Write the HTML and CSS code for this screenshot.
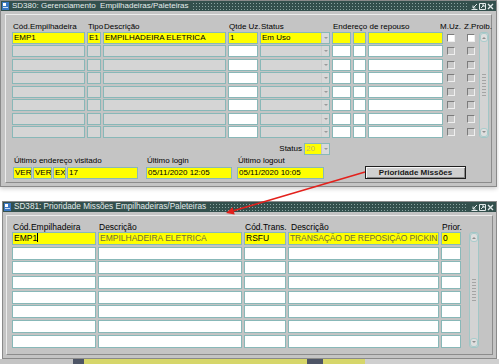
FILE: index.html
```html
<!DOCTYPE html>
<html lang="pt-BR">
<head>
    <meta charset="UTF-8">
    <title>SD380 / SD381</title>
    <link rel="stylesheet" href="styles.css">
</head>
<body>
<div class="screen">

    <!-- SD380 -->
    <div class="win win-main">
        <div class="titlebar">
            <svg class="app-icon" width="7" height="8" viewBox="0 0 7 8"><rect x="0" y="0" width="7" height="8" fill="#3b78c4"/><rect x="1" y="1" width="3" height="3" fill="#fff"/><rect x="1" y="5" width="5" height="1" fill="#cfe0f5"/></svg>
            <span class="title">SD380: Gerenciamento&nbsp; Empilhadeiras/Paleteiras</span>
            <span class="hatch"></span>
            <span class="wbtns">
                <svg width="7" height="7" viewBox="0 0 7 7"><path d="M6 1L2 5M2 2.5V5H4.5M0.5 6.5H6.5" stroke="#e2eaea" fill="none"/></svg>
                <svg width="7" height="7" viewBox="0 0 7 7"><path d="M0.5 0.5H6.5V6.5H0.5Z M2 5L5 2M3 2H5V4" stroke="#e2eaea" fill="none"/></svg>
                <svg width="7" height="7" viewBox="0 0 7 7"><path d="M1 1L6 6M6 1L1 6" stroke="#e2eaea" stroke-width="1.3" fill="none"/></svg>
            </span>
        </div>
        <div class="panel panel-main">
            <div class="g1 head">
                <span class="h1">Cód.Empilhadeira</span>
                <span class="h2">Tipo</span>
                <span class="h3">Descrição</span>
                <span class="h4">Qtde Uz.</span>
                <span class="h5">Status</span>
                <span class="h6">Endereço de repouso</span>
                <span class="h7">M.Uz.</span>
                <span class="h8">Z.Proib.</span>
            </div>
            <div class="block">
                <div class="rows rows1">
                    <div class="g1 r1">
                        <div class="c y">EMP1</div><div class="c y">E1</div><div class="c y">EMPILHADEIRA ELETRICA</div><div class="c y">1</div>
                        <div class="c y dd"><span>Em Uso</span><i class="arr"></i></div>
                        <div class="c y"></div><div class="c y"></div><div class="c y"></div>
                        <div class="chk"><b class="on"></b></div><div class="chk k2"><b class="on"></b></div>
                    </div>
                    <div class="g1 r1">
                        <div class="c g"></div><div class="c g"></div><div class="c g"></div><div class="c"></div>
                        <div class="c g dd"><span></span><i class="arr"></i></div>
                        <div class="c"></div><div class="c"></div><div class="c"></div>
                        <div class="chk"><b></b></div><div class="chk k2"><b></b></div>
                    </div>
                    <div class="g1 r1">
                        <div class="c g"></div><div class="c g"></div><div class="c g"></div><div class="c"></div>
                        <div class="c g dd"><span></span><i class="arr"></i></div>
                        <div class="c"></div><div class="c"></div><div class="c"></div>
                        <div class="chk"><b></b></div><div class="chk k2"><b></b></div>
                    </div>
                    <div class="g1 r1">
                        <div class="c g"></div><div class="c g"></div><div class="c g"></div><div class="c"></div>
                        <div class="c g dd"><span></span><i class="arr"></i></div>
                        <div class="c"></div><div class="c"></div><div class="c"></div>
                        <div class="chk"><b></b></div><div class="chk k2"><b></b></div>
                    </div>
                    <div class="g1 r1">
                        <div class="c g"></div><div class="c g"></div><div class="c g"></div><div class="c"></div>
                        <div class="c g dd"><span></span><i class="arr"></i></div>
                        <div class="c"></div><div class="c"></div><div class="c"></div>
                        <div class="chk"><b></b></div><div class="chk k2"><b></b></div>
                    </div>
                    <div class="g1 r1">
                        <div class="c g"></div><div class="c g"></div><div class="c g"></div><div class="c"></div>
                        <div class="c g dd"><span></span><i class="arr"></i></div>
                        <div class="c"></div><div class="c"></div><div class="c"></div>
                        <div class="chk"><b></b></div><div class="chk k2"><b></b></div>
                    </div>
                    <div class="g1 r1">
                        <div class="c g"></div><div class="c g"></div><div class="c g"></div><div class="c"></div>
                        <div class="c g dd"><span></span><i class="arr"></i></div>
                        <div class="c"></div><div class="c"></div><div class="c"></div>
                        <div class="chk"><b></b></div><div class="chk k2"><b></b></div>
                    </div>
                    <div class="g1 r1">
                        <div class="c g"></div><div class="c g"></div><div class="c g"></div><div class="c"></div>
                        <div class="c g dd"><span></span><i class="arr"></i></div>
                        <div class="c"></div><div class="c"></div><div class="c"></div>
                        <div class="chk"><b></b></div><div class="chk k2"><b></b></div>
                    </div>
                </div>
                <div class="sb">
                    <span class="sb-btn"><i class="up"></i></span>
                    <span class="grip"></span>
                    <span class="sb-btn"><i class="down"></i></span>
                </div>
            </div>

            <div class="status-row">
                <span>Status</span>
                <div class="c y dd status-field"><span class="pale">20</span><i class="arr"></i></div>
            </div>

            <div class="foot">
                <div class="fgroup">
                    <div class="lbl">Último endereço visitado</div>
                    <div class="fields">
                        <div class="c y w-ver">VER</div>
                        <div class="c y w-ver">VER</div>
                        <div class="c y w-ex">EX</div>
                        <div class="c y w-num">17</div>
                    </div>
                </div>
                <div class="fgroup grp-login">
                    <div class="lbl">Último login</div>
                    <div class="c y w-date">05/11/2020 12:05</div>
                </div>
                <div class="fgroup grp-logout">
                    <div class="lbl">Último logout</div>
                    <div class="c y w-date2">05/11/2020 10:05</div>
                </div>
                <button class="btn">Prioridade Missões</button>
            </div>
        </div>
    </div>

    <!-- SD381 -->
    <div class="win win-sub">
        <div class="titlebar">
            <svg class="app-icon" width="7" height="8" viewBox="0 0 7 8"><rect x="0" y="0" width="7" height="8" fill="#3b78c4"/><rect x="1" y="1" width="3" height="3" fill="#fff"/><rect x="1" y="5" width="5" height="1" fill="#cfe0f5"/></svg>
            <span class="title">SD381: Prioridade Missões Empilhadeiras/Paleteiras</span>
            <span class="hatch"></span>
            <span class="wbtns">
                <svg width="7" height="7" viewBox="0 0 7 7"><path d="M6 1L2 5M2 2.5V5H4.5M0.5 6.5H6.5" stroke="#e2eaea" fill="none"/></svg>
                <svg width="7" height="7" viewBox="0 0 7 7"><path d="M0.5 0.5H6.5V6.5H0.5Z M2 5L5 2M3 2H5V4" stroke="#e2eaea" fill="none"/></svg>
                <svg width="7" height="7" viewBox="0 0 7 7"><path d="M1 1L6 6M6 1L1 6" stroke="#e2eaea" stroke-width="1.3" fill="none"/></svg>
            </span>
        </div>
        <div class="panel panel-sub">
            <div class="g2 head head2">
                <span>Cód.Empilhadeira</span>
                <span>Descrição</span>
                <span>Cód.Trans.</span>
                <span class="d2">Descrição</span>
                <span>Prior.</span>
            </div>
            <div class="block block2">
                <div class="rows rows2">
                    <div class="g2 r2">
                        <div class="c y">EMP1<i class="caret"></i></div>
                        <div class="c y dim">EMPILHADEIRA ELETRICA</div>
                        <div class="c y">RSFU</div>
                        <div class="c y dim tight">TRANSAÇÃO DE REPOSIÇÃO PICKIN</div>
                        <div class="c y">0</div>
                    </div>
                    <div class="g2 r2"><div class="c"></div><div class="c"></div><div class="c"></div><div class="c"></div><div class="c"></div></div>
                    <div class="g2 r2"><div class="c"></div><div class="c"></div><div class="c"></div><div class="c"></div><div class="c"></div></div>
                    <div class="g2 r2"><div class="c"></div><div class="c"></div><div class="c"></div><div class="c"></div><div class="c"></div></div>
                    <div class="g2 r2"><div class="c"></div><div class="c"></div><div class="c"></div><div class="c"></div><div class="c"></div></div>
                    <div class="g2 r2"><div class="c"></div><div class="c"></div><div class="c"></div><div class="c"></div><div class="c"></div></div>
                    <div class="g2 r2"><div class="c"></div><div class="c"></div><div class="c"></div><div class="c"></div><div class="c"></div></div>
                    <div class="g2 r2"><div class="c"></div><div class="c"></div><div class="c"></div><div class="c"></div><div class="c"></div></div>
                </div>
                <div class="sb">
                    <span class="sb-btn"><i class="up"></i></span>
                    <span class="grip"></span>
                    <span class="sb-btn"><i class="down"></i></span>
                </div>
            </div>
        </div>
    </div>

    <div class="strip"></div>

    <!-- red callout arrow -->
    <svg class="callout" width="499" height="364" viewBox="0 0 499 364">
        <line x1="365" y1="172" x2="233.5" y2="210.8" stroke="#e3211c" stroke-width="1.6"/>
        <polygon points="226,213 234.7,214.4 232.6,207.2" fill="#e3211c"/>
    </svg>
</div>
</body>
</html>
```

FILE: styles.css
```css
* { box-sizing: border-box; }
body {
    margin: 0;
    background-color: #fff;
    font-family: "Liberation Sans", Arial, sans-serif;
    font-size: 8px;
    color: #000;
}
.screen {
    position: relative;
    width: 499px;
    height: 364px;
    overflow: hidden;
}

/* windows */
.win {
    display: flex;
    flex-direction: column;
    background-color: #c4c4c4;
    border: 1px solid #8a8a8a;
}
.win-main {
    width: 497px;
    height: 187px;
    box-shadow: 0 2px 4px rgba(0, 0, 0, 0.18);
}
.win-sub {
    width: 495px;
    height: 158px;
    margin: 14px 0 0 2px;
}
.titlebar {
    height: 10px;
    flex: none;
    display: flex;
    align-items: center;
    background-color: #33504d;
    color: #e4ecec;
    line-height: 10px;
}
.app-icon { margin-left: 1px; flex: none; }
.title { padding: 0 3px 0 3px; white-space: pre; }
.win-sub .title { font-size: 8.2px; }
.hatch {
    flex: 1;
    height: 8px;
    background-image: radial-gradient(circle, #8aa4a1 0.6px, transparent 0.9px);
    background-size: 3px 3px;
}
.wbtns {
    display: flex;
    gap: 1px;
    padding: 0 2px 0 3px;
}
.wbtns svg { display: block; }

.panel {
    flex: 1;
    border: 1px solid;
    border-color: #ececec #8c8c8c #8c8c8c #ececec;
}
.panel-main { margin: 3px 4px; padding: 7px 0 0 6px; }
.panel-sub { margin: 3px 3px; padding: 7px 0 0 5px; font-size: 8.5px; }

/* grids */
.g1 {
    display: grid;
    grid-template-columns: 73px 14px 123px 30px 70px 19px 13px 75px 16px 14px;
    column-gap: 2px;
}
.g2 {
    display: grid;
    grid-template-columns: 84px 144px 42px 151px 20px;
    column-gap: 2px;
}
.head { height: 10px; line-height: 10px; white-space: nowrap; }
.head span { grid-row: 1; padding-left: 1px; }
.h1 { grid-column: 1; }
.h2 { grid-column: 2; }
.h3 { grid-column: 3; }
.h4 { grid-column: 4; }
.h5 { grid-column: 5; }
.h6 { grid-column: 6 / 9; }
.h7 { grid-column: 8 / 10; text-align: right; }
.h8 { grid-column: 10; }
.head2 { height: 9px; line-height: 9px; }
.head2 .d2 { padding-left: 3px; }

.block { display: flex; gap: 2px; }
.block2 { gap: 8px; }
.rows { display: flex; flex-direction: column; }
.rows1 { gap: 1.43px; }
.rows2 { gap: 1.7px; }
.r1 { height: 12px; }
.r2 { height: 13px; }

/* cells */
.c {
    border: 1px solid #88b8b8;
    background-color: #fff;
    padding-left: 1px;
    line-height: 10px;
    white-space: nowrap;
    overflow: hidden;
}
.r2 .c { line-height: 11px; }
.c.y { background-color: #ffff00; }
.c.g { background-color: #d5d5d5; }
.dim { color: #6e6e3a; }
.tight { letter-spacing: -0.12px; }
.caret {
    display: inline-block;
    width: 1px;
    height: 9px;
    background-color: #000;
    vertical-align: -1px;
}
.dd { display: flex; padding-left: 0; }
.dd span { flex: 1; padding-left: 1px; }
.arr {
    width: 8px;
    display: flex;
    align-items: center;
    justify-content: center;
    background-color: #d9d9d9;
    border-left: 1px solid #c4c4c4;
}
.c.g .arr { background-color: #d8d8d8; border-left-color: #cdcdcd; }
.arr::before {
    content: "";
    border-left: 2px solid transparent;
    border-right: 2px solid transparent;
    border-top: 2px solid #9a9a9a;
}

.chk b {
    display: block;
    width: 8px;
    height: 8px;
    margin: 2px 0 0 2px;
    border: 1px solid;
    border-color: #7c7c7c #efefef #efefef #7c7c7c;
    background-color: #c9c9c9;
}
.chk b.on { background-color: #fff; }
.chk.k2 b { margin-left: 4px; }

/* scrollbar */
.sb {
    width: 10px;
    border: 1px solid #a2c6c6;
    border-radius: 3px;
    background-color: #d3d3d3;
    display: flex;
    flex-direction: column;
    justify-content: space-between;
    align-items: center;
}
.sb-btn {
    width: 8px;
    height: 9px;
    border: 1px solid #a9cccc;
    border-radius: 3px;
    background-color: #dedede;
    display: flex;
    align-items: center;
    justify-content: center;
}
.sb-btn i { display: block; border-left: 2px solid transparent; border-right: 2px solid transparent; }
.sb-btn .up { border-bottom: 2px solid #8e8e8e; }
.sb-btn .down { border-top: 2px solid #8e8e8e; }
.grip {
    width: 4px;
    height: 24px;
    background-image: radial-gradient(circle, #a4a4a4 0.6px, transparent 0.9px);
    background-size: 2px 3px;
}

/* status + footer */
.status-row {
    width: 318px;
    height: 12px;
    margin-top: 5px;
    display: flex;
    justify-content: flex-end;
    align-items: center;
    gap: 2px;
    line-height: 10px;
}
.status-field { width: 26px; height: 12px; }
.pale { color: #bdb277; }

.foot {
    display: flex;
    align-items: flex-end;
    margin-top: 1px;
}
.fgroup { margin-left: 1px; }
.grp-login { margin-left: 8px; }
.grp-logout { margin-left: 5px; }
.lbl { line-height: 10px; padding-left: 1px; margin-bottom: 1px; white-space: nowrap; }
.fields { display: flex; gap: 1px; }
.fields .c, .fgroup > .c { height: 12px; }
.w-ver { width: 19px; }
.w-ex { width: 13px; }
.w-num { width: 71px; }
.w-date { width: 86px; }
.w-date2 { width: 87px; }

.btn {
    margin-left: 41px;
    width: 101px;
    height: 13px;
    padding: 0;
    font-family: "Liberation Sans", Arial, sans-serif;
    font-size: 8px;
    font-weight: bold;
    line-height: 11px;
    color: #1a1a1a;
    background-color: #d0d0d0;
    border: 1px solid #1e1e1e;
    box-shadow: inset 1px 1px #f6f6f6, inset -1px -1px #8a8a8a;
}

.strip {
    height: 5px;
    margin-top: 0;
    background: linear-gradient(to right, #c4c4c4 0 73px, #4e5566 73px 84px, #d6d66a 84px 307px, #4e5566 307px 323px, #d6d66a 323px 365px, #cfcfcf 365px);
}

.callout {
    position: absolute;
    left: 0;
    top: 0;
    pointer-events: none;
}
```
